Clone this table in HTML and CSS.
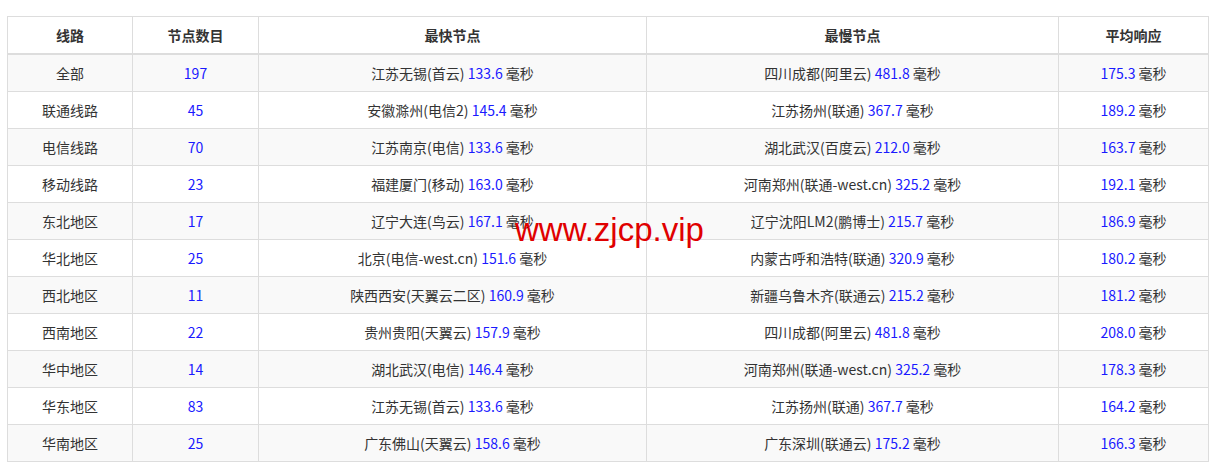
FILE: index.html
```html
<!DOCTYPE html>
<html lang="zh-CN">
<head>
<meta charset="utf-8">
<title>线路测速</title>
<link rel="stylesheet" href="styles.css">
</head>
<body>
<div class="wrap">
<table class="speed">
<colgroup>
<col class="c1"><col class="c2"><col class="c3"><col class="c4"><col class="c5">
</colgroup>
<thead>
<tr><th>线路</th><th>节点数目</th><th>最快节点</th><th>最慢节点</th><th>平均响应</th></tr>
</thead>
<tbody>
<tr><td>全部</td><td><span class="n">197</span></td><td>江苏无锡(首云) <span class="n">133.6</span> 毫秒</td><td>四川成都(阿里云) <span class="n">481.8</span> 毫秒</td><td><span class="n">175.3</span> 毫秒</td></tr>
<tr><td>联通线路</td><td><span class="n">45</span></td><td>安徽滁州(电信2) <span class="n">145.4</span> 毫秒</td><td>江苏扬州(联通) <span class="n">367.7</span> 毫秒</td><td><span class="n">189.2</span> 毫秒</td></tr>
<tr><td>电信线路</td><td><span class="n">70</span></td><td>江苏南京(电信) <span class="n">133.6</span> 毫秒</td><td>湖北武汉(百度云) <span class="n">212.0</span> 毫秒</td><td><span class="n">163.7</span> 毫秒</td></tr>
<tr><td>移动线路</td><td><span class="n">23</span></td><td>福建厦门(移动) <span class="n">163.0</span> 毫秒</td><td>河南郑州(联通-west.cn) <span class="n">325.2</span> 毫秒</td><td><span class="n">192.1</span> 毫秒</td></tr>
<tr><td>东北地区</td><td><span class="n">17</span></td><td>辽宁大连(鸟云) <span class="n">167.1</span> 毫秒</td><td>辽宁沈阳LM2(鹏博士) <span class="n">215.7</span> 毫秒</td><td><span class="n">186.9</span> 毫秒</td></tr>
<tr><td>华北地区</td><td><span class="n">25</span></td><td>北京(电信-west.cn) <span class="n">151.6</span> 毫秒</td><td>内蒙古呼和浩特(联通) <span class="n">320.9</span> 毫秒</td><td><span class="n">180.2</span> 毫秒</td></tr>
<tr><td>西北地区</td><td><span class="n">11</span></td><td>陕西西安(天翼云二区) <span class="n">160.9</span> 毫秒</td><td>新疆乌鲁木齐(联通云) <span class="n">215.2</span> 毫秒</td><td><span class="n">181.2</span> 毫秒</td></tr>
<tr><td>西南地区</td><td><span class="n">22</span></td><td>贵州贵阳(天翼云) <span class="n">157.9</span> 毫秒</td><td>四川成都(阿里云) <span class="n">481.8</span> 毫秒</td><td><span class="n">208.0</span> 毫秒</td></tr>
<tr><td>华中地区</td><td><span class="n">14</span></td><td>湖北武汉(电信) <span class="n">146.4</span> 毫秒</td><td>河南郑州(联通-west.cn) <span class="n">325.2</span> 毫秒</td><td><span class="n">178.3</span> 毫秒</td></tr>
<tr><td>华东地区</td><td><span class="n">83</span></td><td>江苏无锡(首云) <span class="n">133.6</span> 毫秒</td><td>江苏扬州(联通) <span class="n">367.7</span> 毫秒</td><td><span class="n">164.2</span> 毫秒</td></tr>
<tr><td>华南地区</td><td><span class="n">25</span></td><td>广东佛山(天翼云) <span class="n">158.6</span> 毫秒</td><td>广东深圳(联通云) <span class="n">175.2</span> 毫秒</td><td><span class="n">166.3</span> 毫秒</td></tr>
</tbody>
</table>
<div class="watermark">www.zjcp.vip</div>
</div>
</body>
</html>
```

FILE: styles.css
```css
html, body {
  margin: 0;
  padding: 0;
  background: #fff;
}
body {
  font-family: "Noto Sans CJK SC", "Liberation Sans", sans-serif;
  font-size: 14px;
  color: #333;
}
.wrap {
  position: relative;
  padding: 16px 0 0 7px;
}
.speed {
  border-collapse: collapse;
  table-layout: fixed;
  width: 1201px;
  border: 1px solid #ddd;
}
.c1 { width: 125px; }
.c2 { width: 126px; }
.c3 { width: 388px; }
.c4 { width: 412px; }
.c5 { width: 150px; }
.speed th,
.speed td {
  border: 1px solid #ddd;
  padding: 8px;
  height: 20px;
  line-height: 20px;
  text-align: center;
  white-space: nowrap;
  vertical-align: middle;
}
.speed th {
  font-weight: bold;
  color: #333;
  border-bottom: 2px solid #ddd;
}
.speed tbody tr:nth-child(odd) {
  background: #f9f9f9;
}
.n {
  color: #1a1aff;
}
.watermark {
  position: absolute;
  left: 515px;
  top: 210px;
  font-family: "Liberation Sans", Arial, sans-serif;
  font-size: 33px;
  line-height: 40px;
  color: #e00000;
  pointer-events: none;
}
```
